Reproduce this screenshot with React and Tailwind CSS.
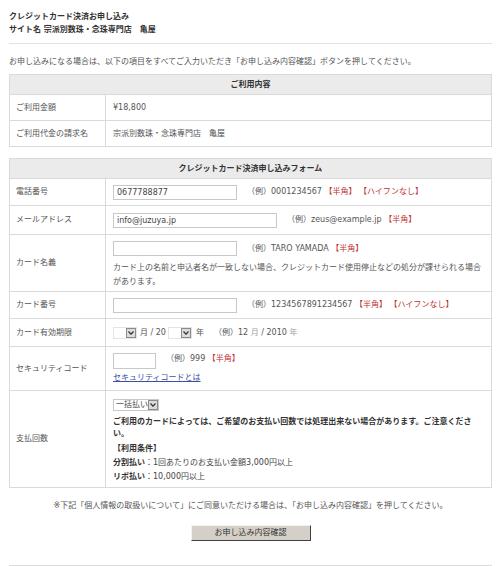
import React from 'react'

const font = { fontFamily: '"DejaVu Sans", "Noto Sans CJK JP", sans-serif' }

const Note = ({ children }) => <span className="text-[#c03030]">{children}</span>

const Arrow = () => (
    <span className="flex items-center justify-center w-[10px] h-[10px] bg-[#dcdcdc] border border-[#8a8a8a]">
        <svg width="6" height="4" viewBox="0 0 6 4">
            <path d="M0.5 0.5 L3 3.2 L5.5 0.5" fill="none" stroke="#333" strokeWidth="1.2" />
        </svg>
    </span>
)

const Label = ({ children }) => (
    <td className="w-[96px] pl-[6px] border border-[#dadada] text-[#555] align-middle">{children}</td>
)

const App = () => {
    return (
        <div className="w-[500px] min-h-[566px] bg-white pl-[9px] pr-[8px] pt-[10px] text-[8px] text-[#555]" style={font}>
            <div className="font-bold text-[#333] leading-[13px]">
                <div>クレジットカード決済お申し込み</div>
                <div>サイト名 宗派別数珠・念珠専門店　亀屋</div>
            </div>
            <div className="mt-[7px] border-t border-[#e2e2e2]"></div>

            <p className="mt-[12px] leading-[12px]">
                お申し込みになる場合は、以下の項目をすべてご入力いただき「お申し込み内容確認」ボタンを押してください。
            </p>

            <table className="mt-[6px] w-full border-collapse border border-[#d2d2d2]">
                <tbody>
                    <tr className="h-[20px]">
                        <th colSpan={2} className="bg-[#ebebeb] border border-[#dadada] font-bold text-[#333] text-center">ご利用内容</th>
                    </tr>
                    <tr className="h-[26px]">
                        <Label>ご利用金額</Label>
                        <td className="pl-[7px] border border-[#dadada]">¥18,800</td>
                    </tr>
                    <tr className="h-[26px]">
                        <Label>ご利用代金の請求名</Label>
                        <td className="pl-[7px] border border-[#dadada]">宗派別数珠・念珠専門店　亀屋</td>
                    </tr>
                </tbody>
            </table>

            <table className="mt-[11px] w-full border-collapse border border-[#d2d2d2]">
                <tbody>
                    <tr className="h-[20px]">
                        <th colSpan={2} className="bg-[#ebebeb] border border-[#dadada] font-bold text-[#333] text-center">クレジットカード決済申し込みフォーム</th>
                    </tr>
                    <tr className="h-[27px]">
                        <Label>電話番号</Label>
                        <td className="pl-[7px] border border-[#dadada]">
                            <div className="flex items-center">
                                <div className="w-[124px] h-[15px] border border-[#c8c8c8] px-[3px] leading-[13px] text-[#444]">0677788877</div>
                                <span className="ml-[10px]">（例）0001234567 <Note>【半角】 【ハイフンなし】</Note></span>
                            </div>
                        </td>
                    </tr>
                    <tr className="h-[29px]">
                        <Label>メールアドレス</Label>
                        <td className="pl-[7px] border border-[#dadada]">
                            <div className="flex items-center">
                                <div className="w-[164px] h-[15px] border border-[#c8c8c8] px-[3px] leading-[13px] text-[#444]">info@juzuya.jp</div>
                                <span className="ml-[10px]">（例）zeus@example.jp <Note>【半角】</Note></span>
                            </div>
                        </td>
                    </tr>
                    <tr className="h-[57px]">
                        <Label>カード名義</Label>
                        <td className="pl-[7px] pr-[6px] pt-[6px] pb-[2px] border border-[#dadada] align-top">
                            <div className="flex items-center">
                                <div className="w-[124px] h-[15px] border border-[#c8c8c8]"></div>
                                <span className="ml-[10px]">（例）TARO YAMADA <Note>【半角】</Note></span>
                            </div>
                            <p className="mt-[5px] leading-[14px]">
                                カード上の名前と申込者名が一致しない場合、クレジットカード使用停止などの処分が課せられる場合があります。
                            </p>
                        </td>
                    </tr>
                    <tr className="h-[27px]">
                        <Label>カード番号</Label>
                        <td className="pl-[7px] border border-[#dadada]">
                            <div className="flex items-center">
                                <div className="w-[124px] h-[15px] border border-[#c8c8c8]"></div>
                                <span className="ml-[10px]">（例）1234567891234567 <Note>【半角】 【ハイフンなし】</Note></span>
                            </div>
                        </td>
                    </tr>
                    <tr className="h-[28px]">
                        <Label>カード有効期限</Label>
                        <td className="pl-[7px] border border-[#dadada]">
                            <div className="flex items-center">
                                <span className="flex items-center justify-end w-[24px] h-[12px] border border-[#e4e4e4]">
                                    <Arrow />
                                </span>
                                <span className="ml-[3px]">月 / 20</span>
                                <span className="ml-[2px] flex items-center justify-end w-[24px] h-[12px] border border-[#e4e4e4]">
                                    <Arrow />
                                </span>
                                <span className="ml-[4px]">年</span>
                                <span className="ml-[10px]">（例）12 <span className="text-[#a0a0a0]">月</span> / 2010 <span className="text-[#a0a0a0]">年</span></span>
                            </div>
                        </td>
                    </tr>
                    <tr className="h-[44px]">
                        <Label>セキュリティコード</Label>
                        <td className="pl-[7px] pt-[6px] border border-[#dadada] align-top">
                            <div className="flex items-start">
                                <div className="w-[43px] h-[16px] border border-[#c8c8c8]"></div>
                                <span className="ml-[10px] leading-[12px]">（例）999 <Note>【半角】</Note></span>
                            </div>
                            <a href="#" className="block mt-[2px] leading-[13px] text-[#3a4fa0] underline">セキュリティコードとは</a>
                        </td>
                    </tr>
                    <tr className="h-[97px]">
                        <Label>支払回数</Label>
                        <td className="pl-[7px] pt-[8px] border border-[#dadada] align-top">
                            <span className="inline-flex items-center h-[12px] border border-[#c8c8c8] pl-[2px]">
                                <span className="leading-[10px] text-[#444]">一括払い</span>
                                <Arrow />
                            </span>
                            <p className="mt-[5px] w-[364px] font-bold text-[#333] leading-[12px]">
                                ご利用のカードによっては、ご希望のお支払い回数では処理出来ない場合があります。ご注意ください。
                            </p>
                            <div className="mt-[2px] leading-[14px] text-[#444]">
                                <div className="font-bold text-[#333]">【利用条件】</div>
                                <div><span className="font-bold text-[#333]">分割払い</span>：1回あたりのお支払い金額3,000円以上</div>
                                <div><span className="font-bold text-[#333]">リボ払い</span>：10,000円以上</div>
                            </div>
                        </td>
                    </tr>
                </tbody>
            </table>

            <p className="mt-[12px] text-center leading-[12px]">
                ※下記「個人情報の取扱いについて」にご同意いただける場合は、「お申し込み内容確認」を押してください。
            </p>

            <div className="mt-[13px] flex justify-center">
                <button
                    type="button"
                    className="w-[120px] h-[16px] bg-[#d4d0c8] border border-t-[#f4f2ee] border-l-[#f4f2ee] border-r-[#404040] border-b-[#404040] text-[#333] leading-[12px]"
                >
                    お申し込み内容確認
                </button>
            </div>

            <div className="mt-[24px] border-t border-[#dcdcdc]"></div>
        </div>
    )
}

export default App
